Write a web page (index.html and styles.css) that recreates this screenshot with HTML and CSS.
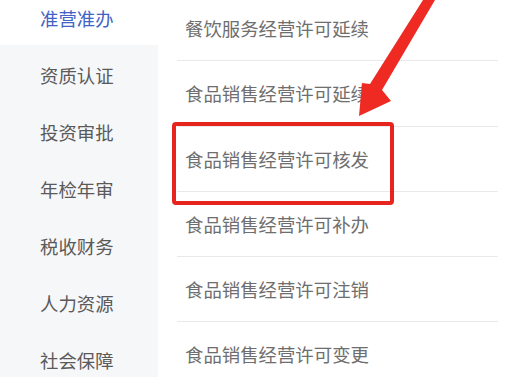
FILE: index.html
```html
<!DOCTYPE html>
<html lang="zh-CN">
<head>
<meta charset="utf-8">
<title>准营准办</title>
<link rel="stylesheet" href="styles.css">
</head>
<body>
<div class="page">
  <nav class="sidebar">
    <div class="nav-item active">准营准办</div>
    <div class="nav-item">资质认证</div>
    <div class="nav-item">投资审批</div>
    <div class="nav-item">年检年审</div>
    <div class="nav-item">税收财务</div>
    <div class="nav-item">人力资源</div>
    <div class="nav-item">社会保障</div>
  </nav>
  <ul class="list">
    <li class="row">餐饮服务经营许可延续</li>
    <li class="row">食品销售经营许可延续</li>
    <li class="row">食品销售经营许可核发</li>
    <li class="row">食品销售经营许可补办</li>
    <li class="row">食品销售经营许可注销</li>
    <li class="row">食品销售经营许可变更</li>
  </ul>
  <div class="highlight"></div>
  <svg class="arrow" width="508" height="377" viewBox="0 0 508 377">
    <polygon points="423,0 435,0 382,90 391,101 359,116 362,83 370,84" fill="#ee2a22"/>
  </svg>
</div>
</body>
</html>
```

FILE: styles.css
```css
html, body {
  margin: 0;
  padding: 0;
  background: #ffffff;
}
body {
  font-family: "Noto Sans CJK SC", "Noto Sans", sans-serif;
  width: 508px;
  height: 377px;
  overflow: hidden;
}
.page {
  position: relative;
  display: flex;
  gap: 19px;
  width: 508px;
  height: 377px;
  overflow: hidden;
}
.sidebar {
  width: 158px;
  flex: none;
  background: #f6f7f9;
  display: flex;
  flex-direction: column;
  margin-top: -10px;
  height: 400px;
}
.nav-item {
  height: 57px;
  line-height: 57px;
  padding-left: 40px;
  font-size: 18.4px;
  color: #5a5a5a;
  white-space: nowrap;
}
.nav-item.active {
  background: #ffffff;
  color: #4262c4;
  height: 55px;
  line-height: 57px;
  margin-bottom: 2px;
}
.list {
  list-style: none;
  margin: -4px 10px 0 0;
  padding: 0;
  flex: 1;
}
.row {
  height: 64.25px;
  border-bottom: 1px solid #e9e9e9;
  display: flex;
  align-items: center;
  padding-left: 8px;
  font-size: 18.4px;
  color: #6e6e6e;
  white-space: nowrap;
}
.highlight {
  position: absolute;
  left: 172px;
  top: 122px;
  width: 214px;
  height: 75px;
  border: 4px solid #e8241e;
  border-radius: 4px;
}
.arrow {
  position: absolute;
  left: 0;
  top: 0;
}
```
